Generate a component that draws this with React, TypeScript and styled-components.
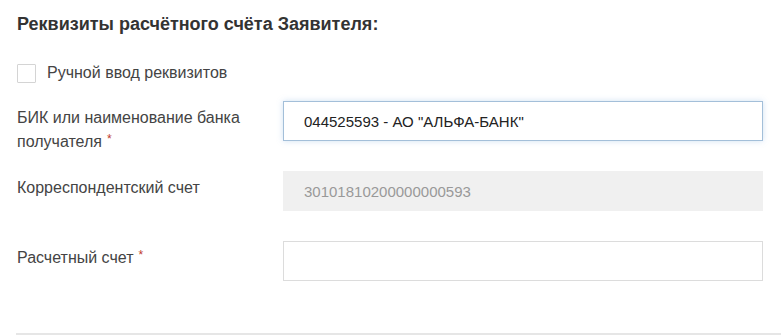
import * as React from "react";
import styled, { createGlobalStyle, css } from "styled-components";

const GlobalStyle = createGlobalStyle`
  html, body {
    margin: 0;
    padding: 0;
    background: #fff;
  }
  body {
    font-family: "Liberation Sans", Arial, sans-serif;
    color: #333;
  }
`;

const SWrapper = styled.div`
  padding: 13px 0 0 17px;
  width: 764px;
`;

const STitle = styled.h3`
  margin: 0;
  font-size: 18px;
  line-height: 22px;
  font-weight: bold;
  color: #333;
`;

const SCheckRow = styled.label`
  display: flex;
  align-items: center;
  gap: 11px;
  margin-top: 28px;
  height: 20px;
  font-size: 16px;
  color: #444;
`;

const SCheckBox = styled.span`
  width: 17px;
  height: 17px;
  border: 1px solid #d4d4d4;
  background: #fff;
  border-radius: 1px;
`;

const SFields = styled.div`
  margin-top: 18px;
  display: flex;
  flex-direction: column;
  gap: 30px;
`;

const SRow = styled.div`
  display: grid;
  grid-template-columns: 266px 480px;
  height: 40px;
`;

const SLabel = styled.div`
  padding-top: 5px;
  font-size: 16px;
  line-height: 24px;
  color: #444;
`;

const SRequired = styled.span`
  display: inline-block;
  color: #c0392b;
  font-size: 12px;
  line-height: 12px;
  vertical-align: top;
  margin: 3px 0 0 5px;
`;

interface IInputProps {
  variant?: "focus" | "disabled";
}

const SInput = styled.input<IInputProps>`
  box-sizing: border-box;
  width: 480px;
  height: 40px;
  margin: 0;
  padding: 0 20px;
  font-family: "Liberation Sans", Arial, sans-serif;
  font-size: 15px;
  color: #222;
  background: #fff;
  border: 1px solid #dcdcdc;
  outline: none;
  ${(props) =>
    props.variant === "focus" &&
    css`
      border-color: #a3bfd9;
      box-shadow: 0 0 6px rgba(120, 170, 220, 0.35);
    `}
  ${(props) =>
    props.variant === "disabled" &&
    css`
      background: #f0f0f0;
      border-color: #f0f0f0;
      color: #999;
    `}
`;

const SDivider = styled.div`
  margin-top: 52px;
  height: 2px;
  margin-left: -1px;
  background: #e6e6e6;
`;

const App = () => {
  return (
    <SWrapper>
      <GlobalStyle />
      <STitle>Реквизиты расчётного счёта Заявителя:</STitle>
      <SCheckRow>
        <SCheckBox />
        Ручной ввод реквизитов
      </SCheckRow>
      <SFields>
        <SRow>
          <SLabel>
            БИК или наименование банка получателя
            <SRequired>*</SRequired>
          </SLabel>
          <SInput variant="focus" defaultValue={'044525593 - АО "АЛЬФА-БАНК"'} />
        </SRow>
        <SRow>
          <SLabel>Корреспондентский счет</SLabel>
          <SInput variant="disabled" readOnly defaultValue="30101810200000000593" />
        </SRow>
        <SRow>
          <SLabel>
            Расчетный счет
            <SRequired>*</SRequired>
          </SLabel>
          <SInput defaultValue="" />
        </SRow>
      </SFields>
      <SDivider />
    </SWrapper>
  );
};

export default App;
